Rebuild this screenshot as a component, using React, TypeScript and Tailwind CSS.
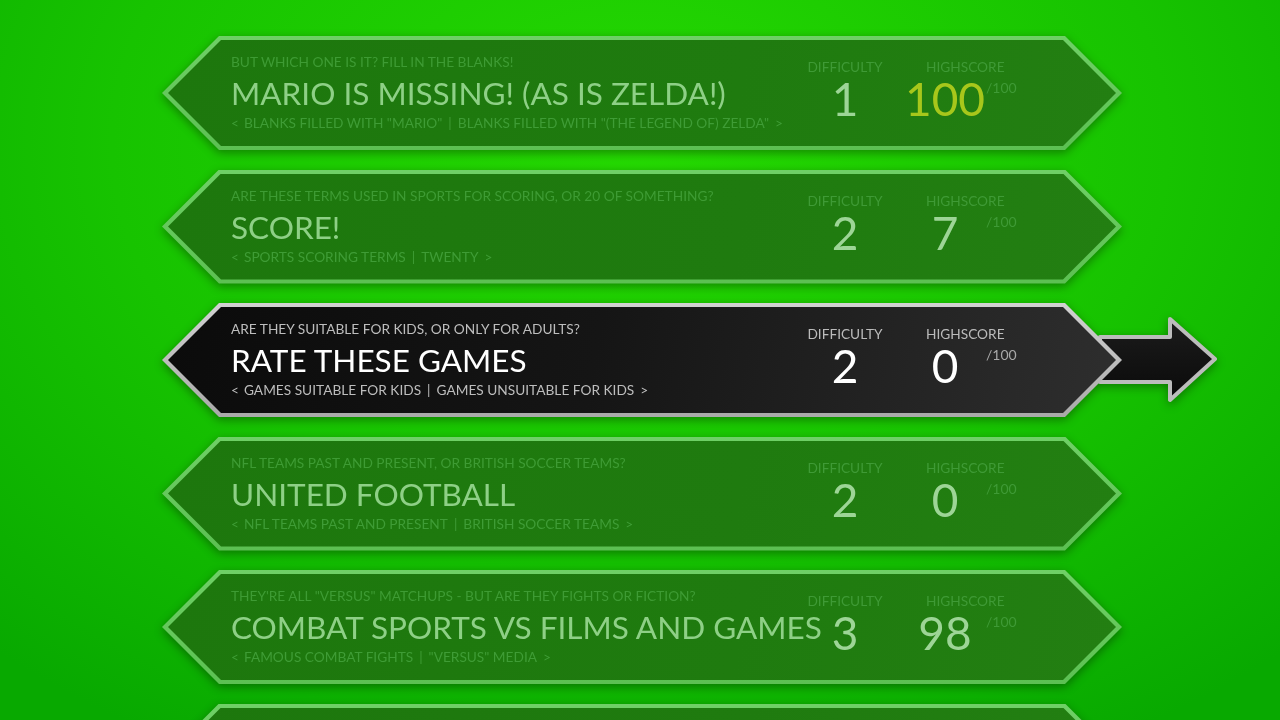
import clsx from "clsx";

type Quiz = {
  subtitle: string;
  title: string;
  left: string;
  right: string;
  difficulty: number;
  score: number;
  selected?: boolean;
};

const quizzes: Quiz[] = [
  {
    subtitle: "But which one is it? Fill in the blanks!",
    title: "Mario is missing! (as is Zelda!)",
    left: 'Blanks filled with "Mario"',
    right: 'Blanks filled with "(The Legend of) Zelda"',
    difficulty: 1,
    score: 100,
  },
  {
    subtitle: "Are these terms used in sports for scoring, or 20 of something?",
    title: "Score!",
    left: "Sports scoring terms",
    right: "Twenty",
    difficulty: 2,
    score: 7,
  },
  {
    subtitle: "Are they suitable for kids, or only for adults?",
    title: "Rate these games",
    left: "Games suitable for kids",
    right: "Games unsuitable for kids",
    difficulty: 2,
    score: 0,
    selected: true,
  },
  {
    subtitle: "NFL teams past and present, or British soccer teams?",
    title: "United Football",
    left: "NFL teams past and present",
    right: "British soccer teams",
    difficulty: 2,
    score: 0,
  },
  {
    subtitle: 'They\'re all "versus" matchups - but are they fights or fiction?',
    title: "Combat sports vs films and games",
    left: "Famous combat fights",
    right: '"Versus" media',
    difficulty: 3,
    score: 98,
  },
  {
    subtitle: "Which side of the line does it fall on?",
    title: "Sort it out",
    left: "Side one",
    right: "Side two",
    difficulty: 2,
    score: 0,
  },
];

// arrow that pokes out of the selected card
function SelectArrow() {
  return (
    <svg
      width="124"
      height="92"
      viewBox="0 0 124 92"
      className="absolute left-[936px] top-[11px]"
    >
      <defs>
        <linearGradient id="arrowFill" x1="0" y1="0" x2="0" y2="1">
          <stop offset="0" stopColor="#1c1c1c" />
          <stop offset="1" stopColor="#0a0a0a" />
        </linearGradient>
      </defs>
      <path
        d="M2 23 L72 23 L72 5 L117 45 L72 86 L72 68 L2 68 Z"
        fill="url(#arrowFill)"
        stroke="#bcbcbc"
        strokeWidth="4"
        strokeLinejoin="round"
      />
    </svg>
  );
}

function QuizCard({ quiz }: { quiz: Quiz }) {
  const sel = !!quiz.selected;
  const perfect = quiz.score === 100;

  return (
    <div className="relative h-[114px] w-[960px] shrink-0 drop-shadow-[0_3px_5px_rgba(0,0,0,0.35)]">
      {sel ? <SelectArrow /> : null}
      <div
        className={clsx(
          "relative h-full px-[6px] py-[4px] [clip-path:polygon(57px_0,903px_0,960px_50%,903px_100%,57px_100%,0_50%)]",
          sel
            ? "bg-[linear-gradient(180deg,#d2d2d2,#a9a9a9)]"
            : "bg-[linear-gradient(180deg,#6fd066,#5cc052)]"
        )}
      >
        <div
          className={clsx(
            "flex h-full pl-[63px] pt-[14px] [clip-path:polygon(53px_0,895px_0,948px_50%,895px_100%,53px_100%,0_50%)]",
            sel
              ? "bg-[linear-gradient(100deg,#0b0b0b_0%,#151515_45%,#2e2e2e_100%)]"
              : "bg-[linear-gradient(100deg,#1d770d_0%,#1f7b0f_60%,#237f12_100%)]"
          )}
        >
          <div className="w-[569px] shrink-0 uppercase">
            <div
              className={clsx(
                "whitespace-nowrap text-[13.7px] leading-[16px]",
                sel ? "text-[#bdbdbd]" : "text-[#3e9b34]"
              )}
            >
              {quiz.subtitle}
            </div>
            <div
              className={clsx(
                "mt-[5px] whitespace-nowrap text-[31.5px] leading-[36px]",
                sel ? "text-white" : "text-[#8ed086]"
              )}
            >
              {quiz.title}
            </div>
            <div
              className={clsx(
                "mt-[4px] flex whitespace-nowrap text-[13.7px] leading-[16px]",
                sel ? "text-[#bdbdbd]" : "text-[#3f9c36]"
              )}
            >
              <span>&lt;</span>
              <span className="ml-[5px]">{quiz.left}</span>
              <span className="mx-[6px]">|</span>
              <span>{quiz.right}</span>
              <span className="ml-[6px]">&gt;</span>
            </div>
          </div>

          <div className="flex pt-[5px] uppercase">
            <div className="flex w-[90px] flex-col items-center">
              <div
                className={clsx(
                  "text-[13.7px] leading-[16px]",
                  sel ? "text-[#bbbbbb]" : "text-[#3f9a36]"
                )}
              >
                Difficulty
              </div>
              <div
                className={clsx(
                  "mt-[1px] text-[46px] leading-[46px]",
                  sel ? "text-white" : "text-[#9dd596]"
                )}
              >
                {quiz.difficulty}
              </div>
            </div>
            <div className="flex w-[130px] flex-col">
              <div
                className={clsx(
                  "ml-[36px] text-[13.7px] leading-[16px]",
                  sel ? "text-[#bbbbbb]" : "text-[#3f9a36]"
                )}
              >
                Highscore
              </div>
              <div className="mt-[1px] flex items-start">
                <div
                  className={clsx(
                    "ml-[15px] w-[80px] text-center text-[46px] leading-[46px]",
                    sel
                      ? "text-white"
                      : perfect
                        ? "text-[#a7c71b]"
                        : "text-[#9dd596]"
                  )}
                >
                  {quiz.score}
                </div>
                <div
                  className={clsx(
                    "ml-[1px] mt-[4px] text-[14px] leading-[16px]",
                    sel ? "text-[#a8a8a8]" : "text-[#3f9a36]"
                  )}
                >
                  /100
                </div>
              </div>
            </div>
          </div>
        </div>
      </div>
    </div>
  );
}

export default function App() {
  return (
    <div className="h-[720px] w-full overflow-hidden bg-[radial-gradient(ellipse_75%_95%_at_50%_20%,#25d902_0%,#17c300_55%,#08a900_100%)] font-['Lato',sans-serif]">
      <div className="flex flex-col gap-[19.5px] pl-[162px] pt-[36px]">
        {quizzes.map((q) => (
          <QuizCard key={q.title} quiz={q} />
        ))}
      </div>
    </div>
  );
}
